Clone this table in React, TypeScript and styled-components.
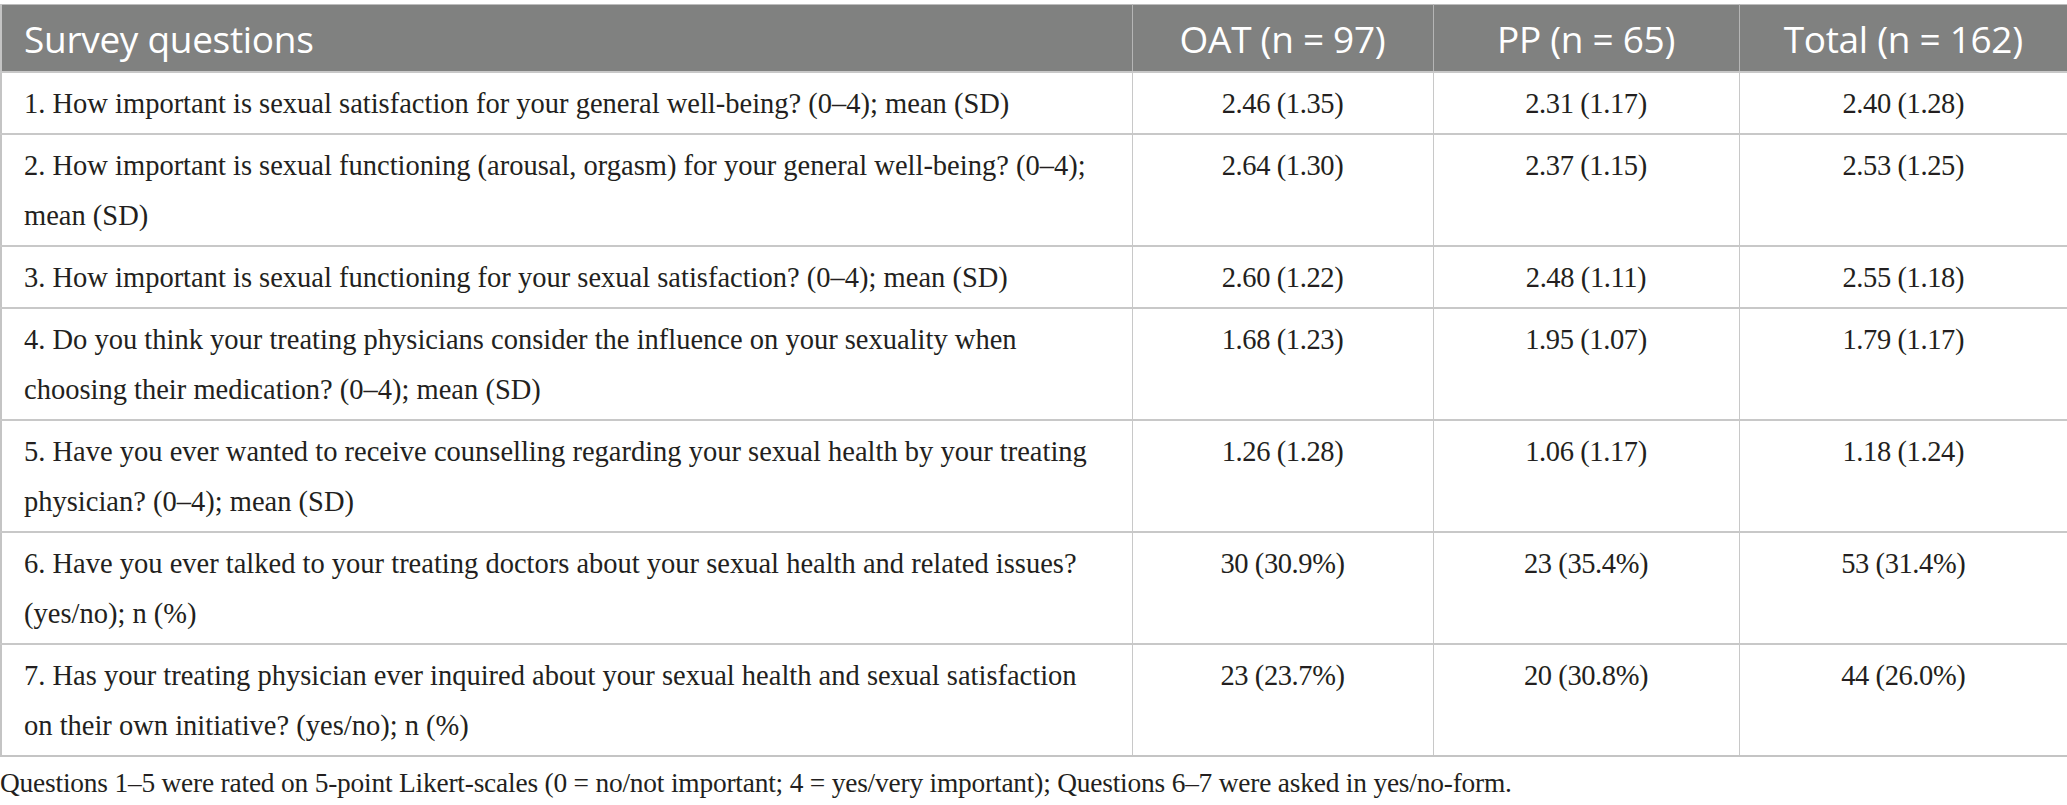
import React from "react";
import styled, { createGlobalStyle } from "styled-components";

const GlobalStyle = createGlobalStyle`
  html, body {
    margin: 0;
    padding: 0;
    background: #ffffff;
  }
  body {
    font-family: "Liberation Serif", "Times New Roman", serif;
    color: #231f20;
  }
`;

const Page = styled.div`
  width: 2067px;
  padding-top: 4px;
`;

const Table = styled.table`
  width: 2067px;
  border-collapse: collapse;
  table-layout: fixed;
  border: 2px solid #c4c4c4;
  border-top: 1px solid #bdbdbd;
`;

const HeadRow = styled.tr`
  background: #808180;
`;

const HeadCell = styled.th<{ $align?: "left" | "center" }>`
  font-family: "Open Sans", "Noto Sans", sans-serif;
  font-weight: 400;
  font-size: 37px;
  color: #ffffff;
  height: 66px;
  padding: 0 22px;
  text-align: ${(p) => p.$align ?? "center"};
  border-left: 1px solid #b5b5b5;
  letter-spacing: -0.3px;
  &:first-child {
    border-left: none;
  }
`;

const BodyRow = styled.tr`
  border-top: 2px solid #c8c8c8;
`;

const QuestionCell = styled.td`
  font-size: 28.5px;
  line-height: 50px;
  padding: 6px 22px 4px 22px;
  vertical-align: top;
  text-align: left;
`;

const ValueCell = styled.td`
  font-size: 28.5px;
  line-height: 50px;
  padding: 6px 8px 4px 8px;
  vertical-align: top;
  text-align: center;
  border-left: 1px solid #c8c8c8;
  letter-spacing: -0.4px;
`;

const Footnote = styled.p`
  margin: 11px 0 0 0;
  font-size: 27.4px;
  line-height: 30px;
  letter-spacing: -0.2px;
`;

type Row = { q: string; oat: string; pp: string; total: string };

const rows: Row[] = [
  {
    q: "1. How important is sexual satisfaction for your general well-being? (0–4); mean (SD)",
    oat: "2.46 (1.35)",
    pp: "2.31 (1.17)",
    total: "2.40 (1.28)",
  },
  {
    q: "2. How important is sexual functioning (arousal, orgasm) for your general well-being? (0–4); mean (SD)",
    oat: "2.64 (1.30)",
    pp: "2.37 (1.15)",
    total: "2.53 (1.25)",
  },
  {
    q: "3. How important is sexual functioning for your sexual satisfaction? (0–4); mean (SD)",
    oat: "2.60 (1.22)",
    pp: "2.48 (1.11)",
    total: "2.55 (1.18)",
  },
  {
    q: "4. Do you think your treating physicians consider the influence on your sexuality when choosing their medication? (0–4); mean (SD)",
    oat: "1.68 (1.23)",
    pp: "1.95 (1.07)",
    total: "1.79 (1.17)",
  },
  {
    q: "5. Have you ever wanted to receive counselling regarding your sexual health by your treating physician? (0–4); mean (SD)",
    oat: "1.26 (1.28)",
    pp: "1.06 (1.17)",
    total: "1.18 (1.24)",
  },
  {
    q: "6. Have you ever talked to your treating doctors about your sexual health and related issues? (yes/no); n (%)",
    oat: "30 (30.9%)",
    pp: "23 (35.4%)",
    total: "53 (31.4%)",
  },
  {
    q: "7. Has your treating physician ever inquired about your sexual health and sexual satisfaction on their own initiative? (yes/no); n (%)",
    oat: "23 (23.7%)",
    pp: "20 (30.8%)",
    total: "44 (26.0%)",
  },
];

export default function App() {
  return (
    <>
      <GlobalStyle />
      <Page>
        <Table>
          <colgroup>
            <col style={{ width: 1131 }} />
            <col style={{ width: 301 }} />
            <col style={{ width: 306 }} />
            <col style={{ width: 329 }} />
          </colgroup>
          <thead>
            <HeadRow>
              <HeadCell $align="left">Survey questions</HeadCell>
              <HeadCell>OAT (n = 97)</HeadCell>
              <HeadCell>PP (n = 65)</HeadCell>
              <HeadCell>Total (n = 162)</HeadCell>
            </HeadRow>
          </thead>
          <tbody>
            {rows.map((r) => (
              <BodyRow key={r.q}>
                <QuestionCell>{r.q}</QuestionCell>
                <ValueCell>{r.oat}</ValueCell>
                <ValueCell>{r.pp}</ValueCell>
                <ValueCell>{r.total}</ValueCell>
              </BodyRow>
            ))}
          </tbody>
        </Table>
        <Footnote>
          Questions 1–5 were rated on 5-point Likert-scales (0 = no/not important; 4 = yes/very important); Questions 6–7 were asked in yes/no-form.
        </Footnote>
      </Page>
    </>
  );
}
